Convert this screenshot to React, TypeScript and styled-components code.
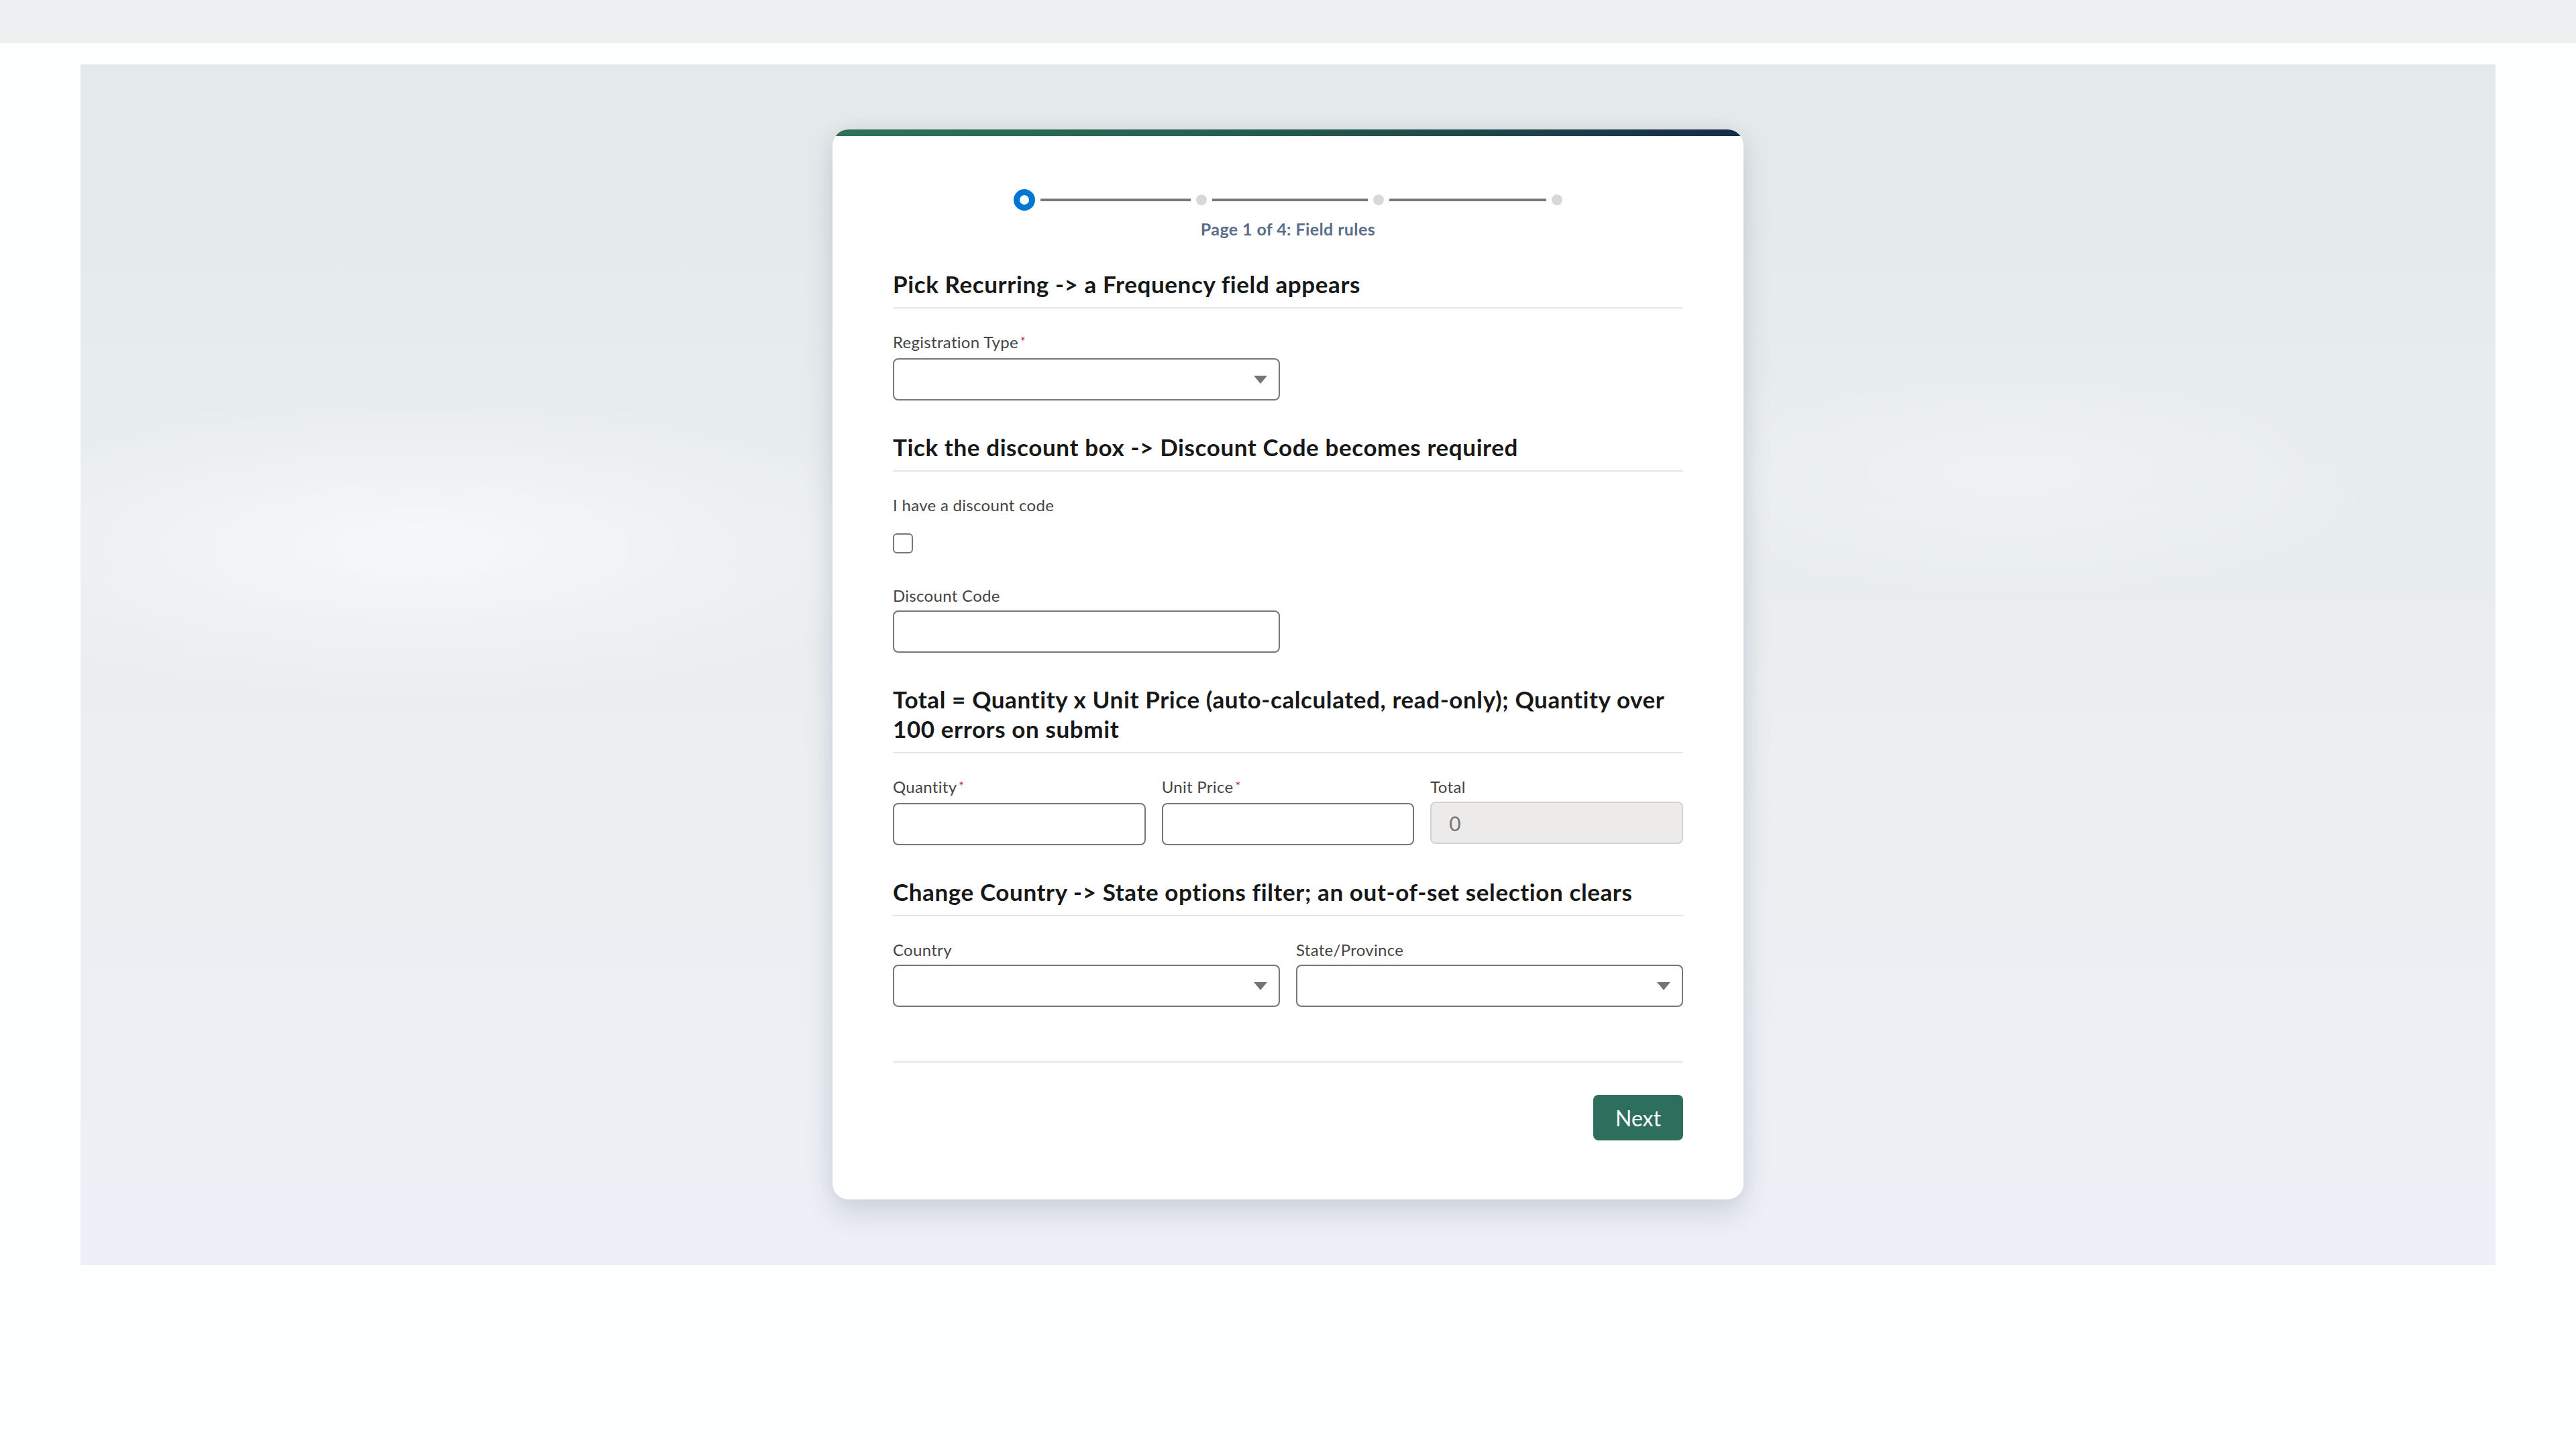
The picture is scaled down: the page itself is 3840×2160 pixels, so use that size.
import * as React from "react";
import styled, { createGlobalStyle } from "styled-components";

const GlobalStyle = createGlobalStyle`
  html, body {
    margin: 0;
    padding: 0;
    background: #fdfefe;
  }
  body {
    font-family: Lato, "Open Sans", "Liberation Sans", sans-serif;
    color: #181818;
  }
  * {
    box-sizing: border-box;
  }
`;

const Page = styled.div`
  width: 3840px;
  min-height: 2160px;
  background: #fdfefe;
`;

const TopBar = styled.header`
  height: 64px;
  background: #eeeff1;
`;

const Stage = styled.main`
  padding: 32px 120px 0;
`;

const Backdrop = styled.section`
  height: 1790px;
  display: flex;
  justify-content: center;
  align-items: flex-start;
  padding-top: 97px;
  background:
    radial-gradient(ellipse 1100px 320px at 14% 40%, rgba(255, 255, 255, 0.6), rgba(255, 255, 255, 0) 72%),
    radial-gradient(ellipse 800px 260px at 80% 34%, rgba(255, 255, 255, 0.3), rgba(255, 255, 255, 0) 72%),
    linear-gradient(180deg, #e3e9ea 0%, #e7ecee 30%, #ebeff2 65%, #edf0f6 100%);
`;

const Card = styled.div`
  width: 1358px;
  background: #ffffff;
  border-radius: 24px;
  overflow: hidden;
  box-shadow: 0 22px 44px rgba(40, 55, 85, 0.14), 0 0 26px rgba(40, 55, 85, 0.06);
  padding-bottom: 88px;
`;

const AccentBar = styled.div`
  height: 10px;
  background: linear-gradient(90deg, #2f7158 0%, #26604f 40%, #1d4349 75%, #16294a 100%);
`;

const Body = styled.div`
  padding: 0 90px;
`;

const Progress = styled.div`
  width: fit-content;
  margin: 79px auto 0;
  display: flex;
  align-items: center;
  gap: 8px;
`;

const CurrentStep = styled.span`
  width: 32px;
  height: 32px;
  border-radius: 50%;
  border: 9px solid #0176d3;
  background: #fff;
  flex: none;
`;

const Step = styled.span`
  width: 16px;
  height: 16px;
  border-radius: 50%;
  background: #d8d8d8;
  flex: none;
`;

const Track = styled.span<{ $w: number }>`
  width: ${(p) => p.$w}px;
  height: 4px;
  background: #777777;
`;

const PageLabel = styled.p`
  margin: 9px 0 0;
  text-align: center;
  font-size: 25px;
  letter-spacing: 0.4px;
  line-height: 36px;
  font-weight: 700;
  color: #5b6e89;
`;

const Section = styled.section<{ $first?: boolean }>`
  margin-top: ${(p) => (p.$first ? "42px" : "47px")};
`;

const SectionTitle = styled.h2`
  margin: 0;
  padding-bottom: 13px;
  border-bottom: 2px solid #e5e5e5;
  font-size: 35px;
  letter-spacing: 0.6px;
  line-height: 44px;
  font-weight: 700;
  color: #181818;
`;

const Row = styled.div<{ $cols: number }>`
  margin-top: 35px;
  display: grid;
  grid-template-columns: repeat(${(p) => p.$cols}, 1fr);
  column-gap: 24px;
`;

const Field = styled.div<{ $top?: number }>`
  display: flex;
  flex-direction: column;
  margin-top: ${(p) => p.$top ?? 0}px;
`;

const Label = styled.label`
  font-size: 24px;
  letter-spacing: 0.3px;
  line-height: 30px;
  color: #444444;
  margin-bottom: 7px;
`;

const Required = styled.abbr`
  color: #ba0517;
  text-decoration: none;
  font-size: 18px;
  margin-left: 3px;
  position: relative;
  top: -4px;
`;

const TextInput = styled.input`
  height: 63px;
  width: 100%;
  border: 2px solid #777777;
  border-radius: 8px;
  padding: 0 26px;
  font-family: inherit;
  font-size: 30px;
  color: #181818;
  background: #fff;
  outline: none;

  &:read-only {
    background: #ecebea;
    border-color: #d2d2d2;
    color: #767676;
  }
`;

const Picklist = styled.button`
  height: 63px;
  width: 100%;
  border: 2px solid #777777;
  border-radius: 8px;
  background: #fff;
  display: flex;
  align-items: center;
  justify-content: flex-end;
  padding: 0 17px 0 26px;
  cursor: pointer;
`;

const CheckLabel = styled(Label)`
  margin-bottom: 27px;
`;

const Checkbox = styled.input`
  appearance: none;
  width: 30px;
  height: 30px;
  margin: 0;
  border: 2px solid #777777;
  border-radius: 6px;
  background: #fff;
`;

const Footer = styled.div`
  margin-top: 81px;
  padding-top: 48px;
  border-top: 2px solid #e5e5e5;
  display: flex;
  justify-content: flex-end;
`;

const NextButton = styled.button`
  height: 68px;
  padding: 0 33px;
  border: none;
  border-radius: 8px;
  background: #2e6e5d;
  color: #fff;
  font-family: inherit;
  font-size: 32px;
  cursor: pointer;
`;

const Caret = () => (
  <svg width="20" height="12" viewBox="0 0 20 12" aria-hidden="true">
    <path d="M0 0 H20 L10 12 Z" fill="#747474" />
  </svg>
);

const Select = ({ label, required }: { label: string; required?: boolean }) => (
  <Field>
    <Label>
      {label}
      {required && <Required title="required">*</Required>}
    </Label>
    <Picklist type="button" aria-label={label}>
      <Caret />
    </Picklist>
  </Field>
);

const Input = ({
  label,
  required,
  value,
  readOnly,
  top,
}: {
  label: string;
  required?: boolean;
  value?: string;
  readOnly?: boolean;
  top?: number;
}) => (
  <Field $top={top}>
    <Label>
      {label}
      {required && <Required title="required">*</Required>}
    </Label>
    <TextInput aria-label={label} defaultValue={value} readOnly={readOnly} />
  </Field>
);

const App = () => {
  return (
    <Page>
      <GlobalStyle />
      <TopBar />
      <Stage>
        <Backdrop>
          <Card>
            <AccentBar />
            <Body>
              <Progress>
                <CurrentStep />
                <Track $w={224} />
                <Step />
                <Track $w={232} />
                <Step />
                <Track $w={234} />
                <Step />
              </Progress>
              <PageLabel>Page 1 of 4: Field rules</PageLabel>

              <Section $first>
                <SectionTitle>Pick Recurring -&gt; a Frequency field appears</SectionTitle>
                <Row $cols={2}>
                  <Select label="Registration Type" required />
                </Row>
              </Section>

              <Section>
                <SectionTitle>Tick the discount box -&gt; Discount Code becomes required</SectionTitle>
                <Row $cols={1}>
                  <Field>
                    <CheckLabel>I have a discount code</CheckLabel>
                    <Checkbox type="checkbox" aria-label="I have a discount code" />
                  </Field>
                </Row>
                <Row $cols={2}>
                  <Input label="Discount Code" top={13} />
                </Row>
              </Section>

              <Section>
                <SectionTitle>
                  Total = Quantity x Unit Price (auto-calculated, read-only); Quantity over 100 errors on submit
                </SectionTitle>
                <Row $cols={3}>
                  <Input label="Quantity" required />
                  <Input label="Unit Price" required />
                  <Input label="Total" value="0" readOnly />
                </Row>
              </Section>

              <Section>
                <SectionTitle>Change Country -&gt; State options filter; an out-of-set selection clears</SectionTitle>
                <Row $cols={2}>
                  <Select label="Country" />
                  <Select label="State/Province" />
                </Row>
              </Section>

              <Footer>
                <NextButton type="button">Next</NextButton>
              </Footer>
            </Body>
          </Card>
        </Backdrop>
      </Stage>
    </Page>
  );
};

export default App;
